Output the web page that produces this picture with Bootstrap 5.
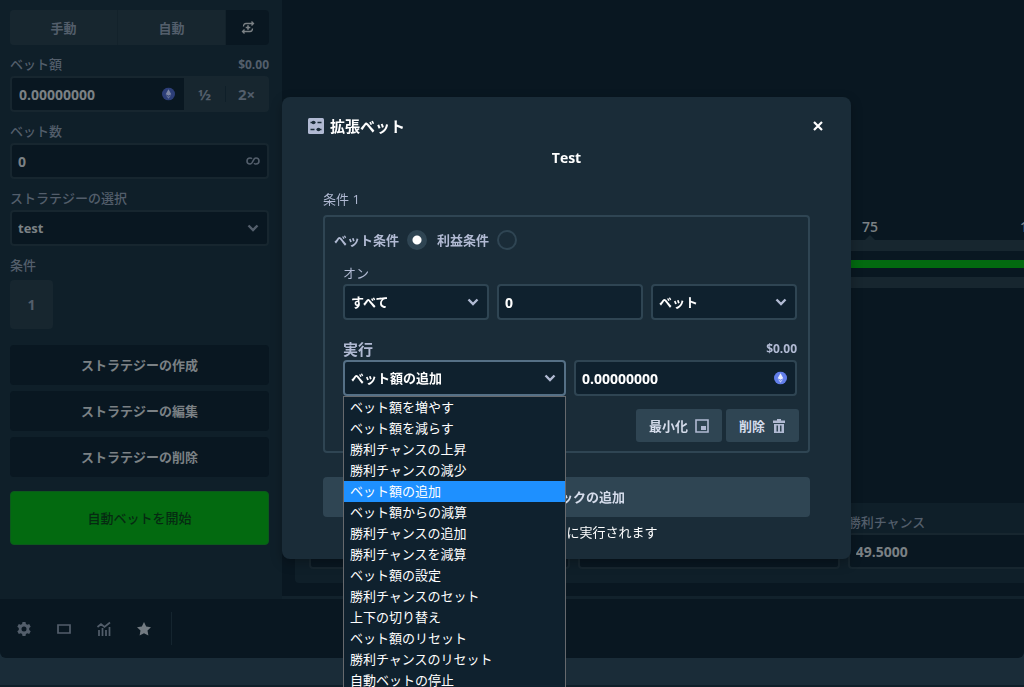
<!DOCTYPE html>
<html lang="ja" data-bs-theme="dark">
<head>
<meta charset="utf-8">
<meta name="viewport" content="width=device-width, initial-scale=1">
<title>拡張ベット</title>
<link href="https://cdn.jsdelivr.net/npm/bootstrap@5.3.0/dist/css/bootstrap.min.css" rel="stylesheet">
<style>
:root{--deep:#091721;--side:#0f1f29;--raised:#17262f;--modal:#1a2c38;--field:#0f212e;--edge:#2f4553;--mute:#b1bad3;--dim:#535e6b;--dimtext:#7b8185;}
body{font-family:"Open Sans","Noto Sans CJK JP",sans-serif;font-size:13px;line-height:20px;background:var(--modal);color:var(--mute);height:100vh;overflow:hidden}
button,input,select{font-family:inherit}
svg{display:block;flex:none}
/* game frame */
.sidebar{width:282px;flex:none;background:var(--side);padding:10px 13px 54px 10px;color:var(--dim);font-weight:600}
.side-label{padding-top:8px;line-height:23px;font-weight:500}
.usd{font-size:12px;font-weight:700}
.tabs{background:var(--raised);border-radius:4px;overflow:hidden;height:35px}
.tabs button,.bet-group button{border:0;background:var(--raised);color:var(--dim);font-weight:700;padding:0}
.tabs button{border-right:1px solid #13222b}
.tabs .swap{width:43px;background:var(--deep);color:var(--dimtext);border:0}
.bet-group{background:var(--raised);border:2px solid var(--raised);border-radius:4px;height:36px}
.bet-group .form-control{height:32px;border:0;border-radius:2px 0 0 2px;padding-left:7px}
.bet-group button{width:41px;flex:none;font-size:15px}
.form-control,.form-select{height:36px;border:2px solid var(--edge);border-radius:4px;background-color:var(--field);color:#fff;font-size:14px;font-weight:700;line-height:20px;padding:0 30px 0 6px;box-shadow:none!important}
.form-select{font-size:13px;background-position:right 8px center;background-size:12px 8px;background-image:url("data:image/svg+xml,%3csvg xmlns='http://www.w3.org/2000/svg' viewBox='0 0 12 8'%3e%3cpath d='M1.5 1.5 6 6l4.500-4.500' fill='none' stroke='%23b1bad3' stroke-width='2.400'/%3e%3c/svg%3e")}
.page .form-control,.page .form-select{background-color:var(--deep);border-color:var(--raised);color:var(--dimtext)}
.page .form-select{background-image:url("data:image/svg+xml,%3csvg xmlns='http://www.w3.org/2000/svg' viewBox='0 0 12 8'%3e%3cpath d='M1.5 1.5 6 6l4.500-4.500' fill='none' stroke='%23535e6b' stroke-width='2.400'/%3e%3c/svg%3e")}
.field-icon{right:9px;top:50%;transform:translateY(-50%)}
.chip{width:43px;height:49px;background:var(--raised);color:var(--dim);border:0;border-radius:4px;font-size:14px;font-weight:700;margin-top:3px}
.side-btn{height:40px;border:0;border-radius:4px;background:var(--deep);color:var(--dimtext);font-size:13px;font-weight:700}
.strategies{margin-top:16px;gap:6px}
.start-btn{height:54px;border:1px solid #0b5a1b;border-radius:4px;background:#036a10;color:#062a12;font-size:13px;font-weight:500;margin-top:14px}
.stage{background:var(--deep);border-bottom:3px solid #12222c;overflow:hidden}
.stage-inner{width:854px;padding:0 13px 13px}
.ruler{padding-top:217px;font-size:14px;font-weight:600;color:var(--dimtext)}
.ruler .ticks{width:162px;margin-right:91px}
.tick{width:28px;margin-right:-14px;margin-left:-14px}
.tick i{border:5px solid transparent;border-bottom-color:var(--raised);border-top:0;width:10px;margin:-2px auto 0}
.track{background:var(--raised);height:48px;padding:11px 0}
.track>div{background:var(--deep);padding:9px 0;height:26px}
.track>div>div{height:8px;background:#036a10}
.panel{background:var(--side);border-radius:4px;padding:8px 14px 14px;display:grid;grid-template-columns:repeat(3,1fr);gap:8px;color:var(--dim);align-items:end}
.panel label{line-height:22px;font-weight:500}
.bar{background:var(--deep);height:59px;border-radius:0 0 6px 6px;padding-left:16px;gap:24px;color:var(--dim)}
.bar button{border:0;background:none;padding:0;color:inherit;width:16px}
.bar .fav{color:#737b82}
.bar .rule-v{width:1px;height:33px;background:#15252f;margin-left:-5px}
.next-strip{height:29px;border-bottom:2px solid #0f1f29}
/* dialog */
.overlay{position:fixed;inset:0;padding:97px 0 0 282px}
.dialog-box{width:100%;max-width:569px;background:var(--modal);border-radius:8px;padding:17px 41px;box-shadow:0 4px 12px #0004}
.dialog-head{height:24px;margin:0 -15px;gap:6px}
.dialog-head h1{font-size:15px;font-weight:700;line-height:20px;color:#fff}
.close-x{border:0;background:none;padding:2px;color:#fff}
.dialog-name{font-size:14px;font-weight:700;line-height:20px;color:#fff;margin:10px 0 21px}
.block{border:2px solid var(--edge);border-radius:4px;margin-top:6px;padding:13px 11px 9px 18px}
.block .field-icon{right:10px}
.kinds{margin-left:-9px;height:20px;gap:10px;font-weight:700}
.kinds label{gap:8px}
.kinds input{appearance:none;width:20px;height:20px;border:2px solid var(--edge);border-radius:50%;margin:0}
.kinds input:checked{background:radial-gradient(circle,#fff 4px,var(--edge) 5px)}
.cols-3{display:grid;grid-template-columns:repeat(3,1fr);gap:8px;margin-top:1px}
.cols-2{display:grid;grid-template-columns:repeat(2,1fr);gap:8px;margin-top:1px}
.on-label{margin-top:13px}
.run-row{margin-top:19px}
.run-row label{font-size:15px;font-weight:700}
.form-select.open{border-color:#557086}
.options{position:absolute;top:36px;left:0;width:100%;background:var(--field);border:1px solid #66696d;color:#fff;line-height:20px;z-index:5}
.options li{padding-left:6px;height:21px}
.options .picked{background:#1e90ff}
.act{height:33px;border:0;border-radius:3px;background:var(--edge);color:#d5dceb;font-size:13px;font-weight:700;padding:0 13px;gap:7px}
.acts{margin:13px -2px 0 0;gap:4px}
.add-btn{height:40px;border:0;border-radius:4px;background:var(--edge);color:#d5dceb;font-size:13px;font-weight:700;margin-top:24px}
.note{color:#fff;margin:5px 0 0}
</style>
</head>
<body>
<div class="page">
  <div class="d-flex">
    <aside class="sidebar">
      <div class="tabs d-flex">
        <button class="flex-fill">手動</button>
        <button class="flex-fill">自動</button>
        <button class="swap d-flex align-items-center justify-content-center" aria-label="拡張">
          <svg width="14" height="13" viewBox="0 0 14 13" fill="none" stroke="currentColor" stroke-width="1.300"><path d="M2.500 5.500C2.500 3.500 3.500 2.500 5 2.500h7M10.500.5l2 2-2 2M11.500 7.500c0 2-1 3-2.500 3H2M3.500 8.500l-2 2 2 2"/><path d="M7 4.200v4.600M4.700 6.500h4.600" stroke-width="1.600"/></svg>
        </button>
      </div>
      <div class="d-flex justify-content-between"><label class="side-label" for="bet">ベット額</label><span class="side-label usd">$0.00</span></div>
      <div class="bet-group d-flex">
        <div class="position-relative flex-fill">
          <input id="bet" class="form-control" value="0.00000000">
          <svg class="position-absolute field-icon" width="13" height="13" viewBox="0 0 14 14"><circle cx="7" cy="7" r="7" fill="#2c3e78"/><path d="M7 2 4 7.200 7 9l3-1.800z" fill="#7d86a4"/><path d="M7 12 4 8.200 7 10l3-1.800z" fill="#68759b"/></svg>
        </div>
        <button>½</button>
        <span class="my-2 border-start" style="--bs-border-color:#0f1f29"></span>
        <button>2×</button>
      </div>
      <label class="side-label d-block" for="count">ベット数</label>
      <div class="position-relative">
        <input id="count" class="form-control" value="0">
        <svg class="position-absolute field-icon" width="14" height="8" viewBox="0 0 14 8" fill="none" stroke="#535e6b" stroke-width="1.600"><path d="M6 1.800C5.500 1.200 4.900 1 4 1 2.200 1 1 2.300 1 4s1.200 3 3 3C7.500 7 6.500 1 10 1c1.800 0 3 1.300 3 3s-1.200 3-3 3c-.9 0-1.500-.2-2-.8"/></svg>
      </div>
      <label class="side-label d-block" for="strategy">ストラテジーの選択</label>
      <select id="strategy" class="form-select"><option>test</option></select>
      <div class="side-label">条件</div>
      <button class="chip d-block">1</button>
      <div class="strategies d-grid">
        <button class="side-btn">ストラテジーの作成</button>
        <button class="side-btn">ストラテジーの編集</button>
        <button class="side-btn">ストラテジーの削除</button>
      </div>
      <button class="start-btn w-100">自動ベットを開始</button>
    </aside>
    <main class="stage flex-fill">
      <div class="stage-inner h-100 d-flex flex-column justify-content-between">
        <div class="ruler">
          <div class="ticks ms-auto d-flex justify-content-between text-center">
            <div class="tick">75<i class="d-block"></i></div>
            <div class="tick">100<i class="d-block"></i></div>
          </div>
          <div class="track"><div><div></div></div></div>
        </div>
        <div class="panel">
          <input class="form-control" aria-label="倍率">
          <input class="form-control" aria-label="ロールオーバー">
          <div><label for="chance">勝利チャンス</label><input id="chance" class="form-control" value="49.5000"></div>
        </div>
      </div>
    </main>
  </div>
  <footer class="bar d-flex align-items-center">
    <button aria-label="設定"><svg width="16" height="16" viewBox="0 0 16 16" fill="currentColor"><path fill-rule="evenodd" d="M6.500 1h3l.4 2 1.400.8 1.900-.7 1.500 2.600L13.200 7v2l1.500 1.300-1.500 2.600-1.900-.7-1.400.8-.4 2h-3l-.4-2-1.400-.8-1.900.7-1.500-2.600L2.800 9V7L1.300 5.700l1.500-2.600 1.900.7L6.100 3zM8 5.500a2.500 2.500 0 1 0 0 5 2.500 2.500 0 0 0 0-5z"/></svg></button>
    <button aria-label="シアター"><svg width="16" height="16" viewBox="0 0 16 16" fill="none" stroke="currentColor" stroke-width="1.700"><path d="M2 4h12v8H2z"/></svg></button>
    <button aria-label="統計"><svg width="16" height="16" viewBox="0 0 16 16" fill="none" stroke="currentColor" stroke-width="1.700"><path d="M1.500 6 5 3l3.500 3L14 1.500M3 9v6M6.500 7v8M10 9v6M13.500 6v9"/></svg></button>
    <button class="fav" aria-label="お気に入り"><svg width="16" height="16" viewBox="0 0 16 16" fill="currentColor"><path d="m8 1 2.200 4.500 4.800.7-3.500 3.400.9 4.900L8 12.200l-4.400 2.300.9-4.900L1 6.200l4.800-.7z"/></svg></button>
    <span class="rule-v"></span>
  </footer>
  <div class="next-strip"></div>
</div>

<div class="overlay">
  <div class="dialog-box" role="dialog" aria-labelledby="dlg">
    <div class="dialog-head d-flex align-items-center">
      <svg width="16" height="16" viewBox="0 0 16 16"><rect width="16" height="16" rx="1.500" fill="#b1bad3"/><path d="M2.500 4.500h5M9.500 4.500h4M2.500 11.500h4M8.500 11.500h5" stroke="#1a2c38" stroke-width="1.300"/><circle cx="5.500" cy="4.500" r="1.800" fill="#1a2c38"/><circle cx="10.500" cy="11.500" r="1.800" fill="#1a2c38"/></svg>
      <h1 id="dlg" class="mb-0 flex-fill">拡張ベット</h1>
      <button class="close-x" aria-label="閉じる"><svg width="10" height="10" viewBox="0 0 10 10" stroke="currentColor" stroke-width="2.200"><path d="m1 1 8 8M9 1 1 9"/></svg></button>
    </div>
    <p class="dialog-name text-center">Test</p>
    <div>条件 1</div>
    <div class="block">
      <div class="kinds d-flex">
        <label class="d-flex align-items-center">ベット条件<input type="radio" name="kind" checked></label>
        <label class="d-flex align-items-center">利益条件<input type="radio" name="kind"></label>
      </div>
      <label class="on-label d-block" for="on">オン</label>
      <div class="cols-3">
        <select id="on" class="form-select"><option>すべて</option></select>
        <input class="form-control" value="0" aria-label="回数">
        <select class="form-select" aria-label="種類"><option>ベット</option></select>
      </div>
      <div class="run-row d-flex justify-content-between"><label for="run">実行</label><span class="usd">$0.00</span></div>
      <div class="cols-2">
        <div class="position-relative">
          <select id="run" class="form-select open"><option>ベット額の追加</option></select>
          <ul class="options list-unstyled mb-0" role="listbox">
            <li>ベット額を増やす</li>
            <li>ベット額を減らす</li>
            <li>勝利チャンスの上昇</li>
            <li>勝利チャンスの減少</li>
            <li class="picked">ベット額の追加</li>
            <li>ベット額からの減算</li>
            <li>勝利チャンスの追加</li>
            <li>勝利チャンスを減算</li>
            <li>ベット額の設定</li>
            <li>勝利チャンスのセット</li>
            <li>上下の切り替え</li>
            <li>ベット額のリセット</li>
            <li>勝利チャンスのリセット</li>
            <li>自動ベットの停止</li>
          </ul>
        </div>
        <div class="position-relative">
          <input class="form-control" value="0.00000000" aria-label="追加額">
          <svg class="position-absolute field-icon" width="13" height="13" viewBox="0 0 14 14"><circle cx="7" cy="7" r="7" fill="#627eea"/><path d="M7 2 4 7.200 7 9l3-1.800z" fill="#e8ecfc"/><path d="M7 12 4 8.200 7 10l3-1.800z" fill="#c3cdf7"/></svg>
        </div>
      </div>
      <div class="acts d-flex justify-content-end">
        <button class="act d-flex align-items-center">最小化<svg width="14" height="14" viewBox="0 0 14 14"><path d="M1 1h12v12H1z" fill="none" stroke="#b1bad3" stroke-width="1.600"/><path d="M6 7h5v4H6z" fill="#b1bad3"/></svg></button>
        <button class="act d-flex align-items-center">削除<svg width="14" height="14" viewBox="0 0 14 14" fill="#b1bad3"><path fill-rule="evenodd" d="M5 0h4v1.500h4V4H1V1.500h4zM2 5h10v9H2zM4.500 6.500v6H6v-6zM8 6.500v6h1.500v-6z"/></svg></button>
      </div>
    </div>
    <button class="add-btn w-100">条件ブロックの追加</button>
    <p class="note text-center">ブロックは順番に実行されます</p>
  </div>
</div>
<script src="https://cdn.jsdelivr.net/npm/bootstrap@5.3.0/dist/js/bootstrap.bundle.min.js"></script>
</body>
</html>
